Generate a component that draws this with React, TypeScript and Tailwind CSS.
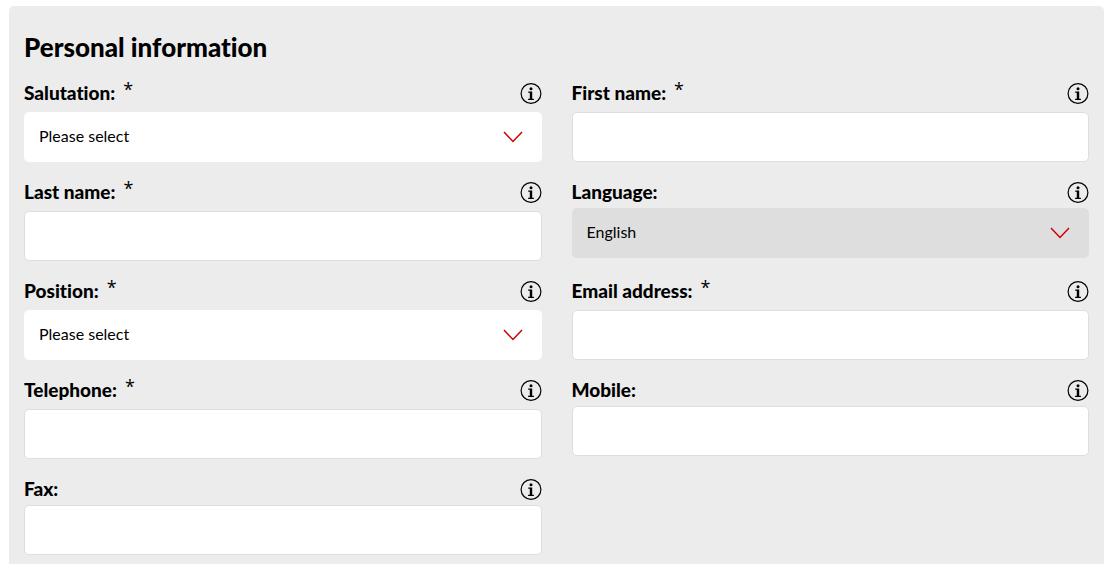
import React from "react";

type FieldProps = {
  id: string;
  label: string;
  required?: boolean;
  options?: string[];
  muted?: boolean;
};

const fields: FieldProps[] = [
  { id: "salutation", label: "Salutation:", required: true, options: ["Please select", "Mr.", "Ms."] },
  { id: "first-name", label: "First name:", required: true },
  { id: "last-name", label: "Last name:", required: true },
  { id: "language", label: "Language:", options: ["English"], muted: true },
  { id: "position", label: "Position:", required: true, options: ["Please select", "Management", "Employee"] },
  { id: "email", label: "Email address:", required: true },
  { id: "telephone", label: "Telephone:", required: true },
  { id: "mobile", label: "Mobile:" },
  { id: "fax", label: "Fax:" },
];

function InfoIcon() {
  return (
    <svg viewBox="0 0 22 22" className="size-[22px]" aria-hidden="true">
      <circle cx="11" cy="10.5" r="9.9" fill="none" stroke="#000" strokeWidth="1.2" />
      <circle cx="11" cy="5.7" r="1.5" fill="#000" />
      <path d="M8.2 8.4h4v7.3h1.7V17H8.1v-1.3h1.7v-6H8.2z" fill="#000" />
    </svg>
  );
}

function Chevron() {
  return (
    <svg viewBox="0 0 20 12" className="h-3 w-5" aria-hidden="true">
      <path d="M1 1l9 9.5L19 1" fill="none" stroke="#cc0000" strokeWidth="1.5" />
    </svg>
  );
}

function Field({ id, label, required, options, muted }: FieldProps) {
  return (
    <div>
      <div className={`flex items-start justify-between ${required ? "h-[29px]" : "h-[26px]"}`}>
        <label htmlFor={id} className="flex text-[19px] leading-5 font-black">
          {label}
          {required && (
            <span className="pl-2 font-['Open_Sans',sans-serif] text-[18px] leading-3 font-normal">*</span>
          )}
        </label>
        <button type="button" aria-label={`Information about ${label.replace(":", "")}`}>
          <InfoIcon />
        </button>
      </div>
      {options ? (
        <div className="grid items-center">
          <select
            id={id}
            required={required}
            className={`col-start-1 row-start-1 h-[50px] w-full appearance-none rounded-[5px] pb-0.5 pl-[15px] text-[16px] ${muted ? "bg-[#dedede]" : "bg-white"}`}
          >
            {options.map((option) => (
              <option key={option}>{option}</option>
            ))}
          </select>
          <span className="pointer-events-none col-start-1 row-start-1 mr-[19px] justify-self-end">
            <Chevron />
          </span>
        </div>
      ) : (
        <input
          id={id}
          required={required}
          className="block h-[50px] w-full rounded-[5px] border border-[#dedede] bg-white px-3.5 text-[16px]"
        />
      )}
    </div>
  );
}

export default function App() {
  return (
    <main className="flex min-h-screen bg-white pt-1.5 pr-2 pl-[9px] font-[Lato,sans-serif] text-black">
      <form className="flex-1 rounded-t-[5px] bg-[#ececec] px-[15px] pt-[26px] pb-2 [font-variant-ligatures:none]">
        <h1 className="text-[26px] leading-[30px] font-black">Personal information</h1>
        <div className="mt-[21px] grid grid-cols-2 gap-x-[30px] gap-y-5">
          {fields.map((field) => (
            <Field key={field.id} {...field} />
          ))}
        </div>
      </form>
    </main>
  );
}
